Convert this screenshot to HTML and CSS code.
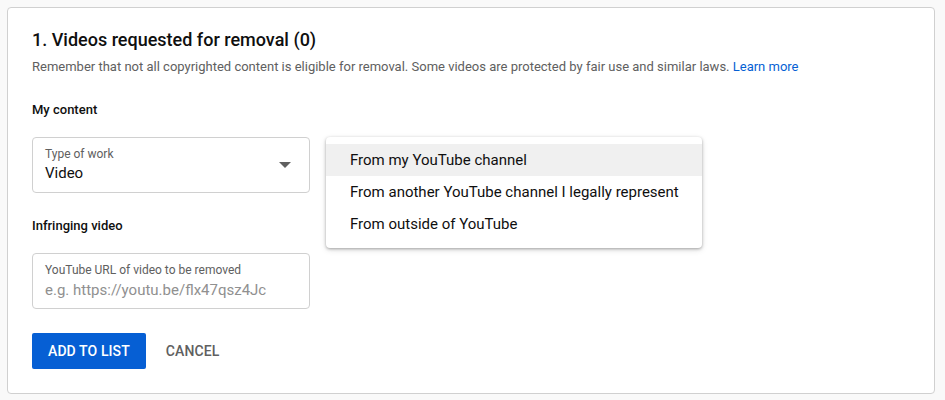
FILE: index.html
```html
<!DOCTYPE html>
<html lang="en">
<head>
<meta charset="utf-8">
<title>Videos requested for removal</title>
<link rel="stylesheet" href="styles.css">
</head>
<body>
<div class="card">
  <h2 class="title">1. Videos requested for removal (0)</h2>
  <p class="subtitle">Remember that not all copyrighted content is eligible for removal. Some videos are protected by fair use and similar laws. <a class="link" href="#">Learn more</a></p>

  <div class="section-label first">My content</div>
  <div class="row">
    <div class="field select">
      <div class="field-label">Type of work</div>
      <div class="field-value">Video</div>
      <svg class="arrow" width="12" height="6" viewBox="0 0 12 6"><path d="M0 0h12L6 6z" fill="#606060"/></svg>
    </div>
    <ul class="menu">
      <li class="menu-item active">From my YouTube channel</li>
      <li class="menu-item">From another YouTube channel I legally represent</li>
      <li class="menu-item">From outside of YouTube</li>
    </ul>
  </div>

  <div class="section-label">Infringing video</div>
  <div class="field">
    <div class="field-label">YouTube URL of video to be removed</div>
    <div class="field-value placeholder">e.g. https://youtu.be/flx47qsz4Jc</div>
  </div>

  <div class="actions">
    <button class="btn primary">ADD TO LIST</button>
    <button class="btn text">CANCEL</button>
  </div>
</div>
</body>
</html>
```
FILE: styles.css
```css
html, body {
  margin: 0;
  padding: 0;
  background: #f9f9f9;
  font-family: Roboto, "Noto Sans", Arial, sans-serif;
  color: #0f0f0f;
}
body {
  padding: 7px 0 0 7px;
}
.card {
  box-sizing: border-box;
  width: 928px;
  height: 387px;
  background: #fff;
  border: 1px solid #d0d0d0;
  border-radius: 4px;
  padding: 20px 24px;
}
.title {
  margin: 0;
  font-size: 18px;
  line-height: 24px;
  font-weight: 500;
  color: #0f0f0f;
}
.subtitle {
  margin: 6px 0 0;
  font-size: 13px;
  line-height: 18px;
  color: #606060;
}
.link {
  color: #065fd4;
  text-decoration: none;
}
.section-label {
  margin-top: 24px;
  font-size: 13px;
  line-height: 18px;
  font-weight: 500;
  color: #0f0f0f;
}
.section-label.first {
  margin-top: 25px;
}
.row {
  position: relative;
  margin-top: 18px;
  margin-bottom: 24px;
}
.field {
  position: relative;
  box-sizing: border-box;
  width: 278px;
  height: 56px;
  border: 1px solid #d0d0d0;
  border-radius: 4px;
  padding: 8px 12px 0;
}
.section-label + .field {
  margin-top: 18px;
}
.field-label {
  font-size: 12px;
  line-height: 16px;
  color: #606060;
}
.field-value {
  font-size: 15px;
  line-height: 22px;
  color: #0f0f0f;
}
.field-value.placeholder {
  color: #909090;
  margin-top: 1px;
}
.arrow {
  position: absolute;
  right: 18px;
  top: 24px;
}
.menu {
  position: absolute;
  left: 294px;
  top: 0;
  width: 376px;
  margin: 0;
  padding: 7px 0 8px;
  list-style: none;
  background: #fff;
  border-radius: 4px;
  box-shadow: 0 1px 3px rgba(0,0,0,0.3), 0 2px 6px rgba(0,0,0,0.12);
}
.menu-item {
  height: 32px;
  line-height: 32px;
  padding: 0 24px;
  font-size: 15px;
  color: #0f0f0f;
  white-space: nowrap;
}
.menu-item.active {
  background: #f0f0f0;
}
.actions {
  display: flex;
  gap: 4px;
  margin-top: 24px;
}
.btn {
  height: 36px;
  padding: 0 16px;
  border: none;
  border-radius: 2px;
  font-family: Roboto, "Noto Sans", Arial, sans-serif;
  font-size: 14px;
  font-weight: 500;
  letter-spacing: 0.1px;
  cursor: pointer;
}
.btn.primary {
  background: #065fd4;
  color: #fff;
}
.btn.text {
  background: transparent;
  color: #606060;
}
```
